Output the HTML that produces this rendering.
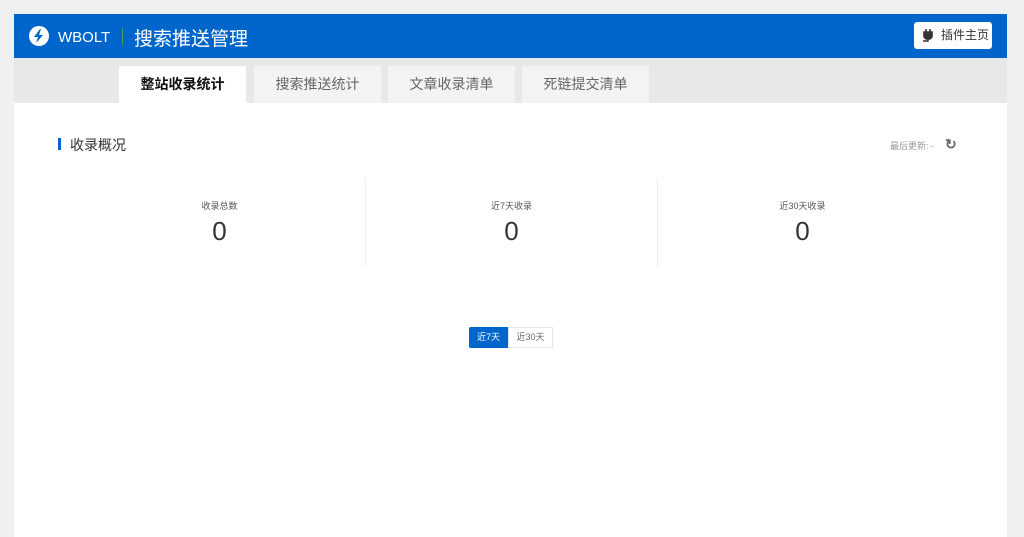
<!DOCTYPE html>
<html><head><meta charset="utf-8"><style>
body{margin:0;width:1024px;height:537px;background:#f0f0f0;font-family:"Liberation Sans","Noto Sans CJK SC",sans-serif;overflow:hidden;position:relative}
.p{position:absolute;left:14px;top:14px;width:993px;height:523px;background:#fff}
.h{position:absolute;left:0;top:0;width:993px;height:44px;background:#0066cc;color:#fff}
.tb{position:absolute;left:0;top:44px;width:993px;height:45px;background:#e8e8e8}
.t{position:absolute;top:8px;width:127px;height:37px;background:#f3f3f3;color:#666;font-size:14px;text-align:center;line-height:37px}
.t.a{background:#fff;color:#111;font-weight:bold}
.s{position:absolute;top:164px;width:291px;height:89px;text-align:center}
.s .l{font-size:9px;color:#555;margin-top:21px}
.s .n{font-size:26px;color:#333;margin-top:4px}
</style></head><body>
<div class="p">
<div class="h">
<svg style="position:absolute;left:15px;top:12px" width="20" height="20" viewBox="0 0 20 20"><circle cx="10" cy="10" r="10" fill="#fff"/><path d="M11 3L5 11h4l-2 6 7-8h-4l2-6z" fill="#0066cc"/></svg>
<div style="position:absolute;left:44px;top:15px;font-size:15px">WBOLT</div>
<div style="position:absolute;left:108px;top:14px;width:1px;height:17px;background:#4c9a6a"></div>
<div style="position:absolute;left:120px;top:10px;font-size:19px">搜索推送管理</div>
<div style="position:absolute;left:900px;top:8px;width:78px;height:27px;background:#fff;border-radius:3px;color:#333;font-size:12px;line-height:27px"><svg style="position:absolute;left:8px;top:7px" width="12" height="13" viewBox="0 0 12 13"><path d="M4 0v3M8 0v3M2 3h8v4a3 3 0 0 1-3 3H5a3 3 0 0 1-3-3z" stroke="#333" stroke-width="1.6" fill="#333"/><path d="M6 10v2H1" stroke="#333" stroke-width="1.4" fill="none"/></svg><span style="position:absolute;left:27px">插件主页</span></div>
</div>
<div class="tb">
<div class="t a" style="left:105px">整站收录统计</div>
<div class="t" style="left:240px">搜索推送统计</div>
<div class="t" style="left:374px">文章收录清单</div>
<div class="t" style="left:508px">死链提交清单</div>
</div>
<div style="position:absolute;left:44px;top:124px;width:3px;height:12px;background:#0066cc"></div>
<div style="position:absolute;left:56px;top:121px;font-size:14px;color:#333">收录概况</div>
<div style="position:absolute;left:876px;top:125px;font-size:9px;color:#999">最后更新: -</div>
<div style="position:absolute;left:931px;top:122px;font-size:14px;font-weight:bold;color:#666">↻</div>
<div class="s" style="left:60px"><div class="l">收录总数</div><div class="n">0</div></div>
<div class="s" style="left:351px;border-left:1px solid #eee;border-right:1px solid #eee"><div class="l">近7天收录</div><div class="n">0</div></div>
<div class="s" style="left:643px"><div class="l">近30天收录</div><div class="n">0</div></div>
<div style="position:absolute;left:455px;top:313px;width:39px;height:21px;background:#0066cc;color:#fff;font-size:9px;line-height:21px;text-align:center;border-radius:2px 0 0 2px">近7天</div>
<div style="position:absolute;left:494px;top:313px;width:43px;height:19px;border:1px solid #e5e5e5;color:#666;font-size:9px;line-height:19px;text-align:center">近30天</div>
</div>
</body></html>
